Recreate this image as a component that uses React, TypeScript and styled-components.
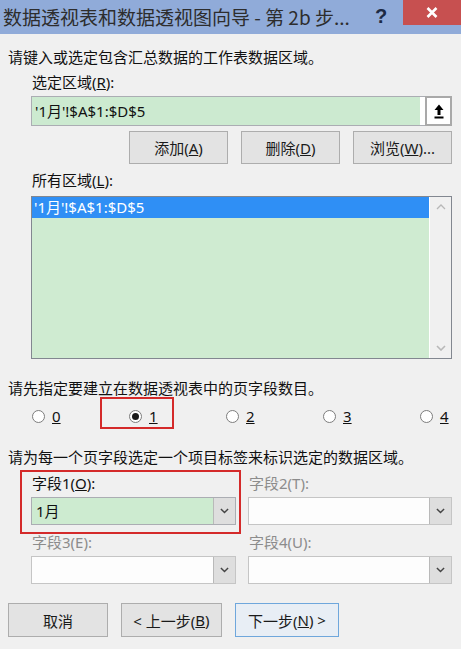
import React from 'react'
import styled, { createGlobalStyle } from 'styled-components'

const GlobalStyle = createGlobalStyle`
  html, body {
    margin: 0;
    padding: 0;
    background: #f0f0f0;
  }
  body {
    font-family: "Noto Sans", "Noto Sans CJK SC", sans-serif;
  }
`

const Window = styled.div`
  width: 461px;
  height: 649px;
  background: #f0f0f0;
  overflow: hidden;
  display: flex;
  flex-direction: column;
  font-size: 15px;
  color: #111;
`

const TitleBar = styled.div`
  height: 34px;
  flex-shrink: 0;
  display: flex;
  align-items: flex-start;
  background: #90abd9;
`

const Title = styled.div`
  flex: 1;
  padding-left: 3px;
  font-family: "Noto Sans CJK SC", sans-serif;
  font-size: 19px;
  line-height: 34px;
  color: #2d2d2d;
  white-space: nowrap;
  overflow: hidden;
`

const HelpButton = styled.div`
  width: 44px;
  height: 34px;
  line-height: 32px;
  text-align: center;
  font-family: "Liberation Sans", sans-serif;
  font-weight: bold;
  font-size: 20px;
  color: #1d2a44;
`

const CloseButton = styled.div`
  width: 58px;
  height: 25px;
  background: #c75050;
  display: flex;
  align-items: center;
  justify-content: center;
`

const Content = styled.div`
  padding: 13px 9px 0 8px;
  display: flex;
  flex-direction: column;
`

const Text = styled.div<{ $indent?: boolean; $gap?: number }>`
  line-height: 20px;
  height: 20px;
  white-space: nowrap;
  margin-top: ${p => p.$gap ?? 0}px;
  padding-left: ${p => (p.$indent ? 24 : 0)}px;
`

const Key = styled.span`
  text-decoration: underline;
`

const RangeInput = styled.div`
  margin: 4px 0 0 23px;
  height: 30px;
  box-sizing: border-box;
  border: 1px solid #abadb3;
  background: #fff;
  display: flex;
`

const RangeText = styled.div`
  flex: 1;
  margin-right: 5px;
  background: #ccead0;
  padding-left: 3px;
  line-height: 28px;
  font-size: 15px;
`

const RefButton = styled.div`
  width: 27px;
  margin: -1px -1px -1px 0;
  box-sizing: border-box;
  border: 2px solid #a9a9a9;
  background: #fff;
  display: flex;
  align-items: center;
  justify-content: center;
`

const ButtonRow = styled.div<{ $align: 'start' | 'end'; $gap: number }>`
  display: flex;
  justify-content: ${p => (p.$align === 'end' ? 'flex-end' : 'flex-start')};
  gap: 13px;
  margin-top: ${p => p.$gap}px;
`

const Button = styled.div<{ $default?: boolean; $width?: number; $height?: number }>`
  width: ${p => p.$width ?? 99}px;
  height: ${p => p.$height ?? 33}px;
  box-sizing: border-box;
  border: 1px solid ${p => (p.$default ? '#6fa7dc' : '#adadad')};
  background: ${p => (p.$default ? '#e8eef5' : '#e3e3e3')};
  display: flex;
  align-items: center;
  justify-content: center;
  font-size: 15px;
  color: #1a1a1a;
`

const ListBox = styled.div`
  margin: 6px 0 0 23px;
  height: 163px;
  box-sizing: border-box;
  border: 1px solid #828790;
  display: flex;
  background: #fff;
`

const ListArea = styled.div`
  flex: 1;
  background: #cfebd1;
  margin-right: 1px;
`

const ListItem = styled.div<{ $selected?: boolean }>`
  height: 21px;
  line-height: 21px;
  padding-left: 2px;
  background: ${p => (p.$selected ? '#2f8ff5' : 'transparent')};
  color: ${p => (p.$selected ? '#fff' : '#111')};
`

const ScrollBar = styled.div`
  width: 21px;
  background: #f0f0f0;
  display: flex;
  flex-direction: column;
  justify-content: space-between;
  align-items: center;
  padding: 7px 0 7px;
`

const RadioRow = styled.div`
  margin-top: 2px;
  height: 32px;
  padding-left: 24px;
  display: grid;
  grid-template-columns: repeat(5, 97px);
  align-items: center;
`

const RadioItem = styled.div<{ $highlight?: boolean }>`
  position: relative;
  display: flex;
  align-items: center;
  gap: 7px;
  height: 32px;

  &::before {
    content: '';
    display: ${p => (p.$highlight ? 'block' : 'none')};
    position: absolute;
    left: -29px;
    top: -3px;
    width: 74px;
    height: 32px;
    box-sizing: border-box;
    border: 2px solid #d42a2a;
  }
`

const RadioCircle = styled.span<{ $checked?: boolean }>`
  width: 13px;
  height: 13px;
  box-sizing: border-box;
  border-radius: 50%;
  border: 1px solid #7d7d7d;
  background: #fff;
  display: flex;
  align-items: center;
  justify-content: center;

  &::after {
    content: '';
    display: ${p => (p.$checked ? 'block' : 'none')};
    width: 7px;
    height: 7px;
    border-radius: 50%;
    background: #1a1a1a;
  }
`

const FieldGrid = styled.div`
  margin: 6px 0 0 23px;
  display: grid;
  grid-template-columns: 205px 204px;
  column-gap: 12px;
  row-gap: 7px;
`

const Field = styled.div<{ $highlight?: boolean }>`
  position: relative;
  display: flex;
  flex-direction: column;

  &::before {
    content: '';
    display: ${p => (p.$highlight ? 'block' : 'none')};
    position: absolute;
    left: -11px;
    right: -5px;
    top: -3px;
    bottom: -9px;
    border: 2px solid #d42a2a;
  }
`

const FieldLabel = styled.div<{ $disabled?: boolean }>`
  line-height: 20px;
  height: 20px;
  padding-left: 1px;
  color: ${p => (p.$disabled ? '#8c8c8c' : '#111')};
`

const Combo = styled.div<{ $disabled?: boolean }>`
  margin-top: 4px;
  height: 28px;
  box-sizing: border-box;
  border: 1px solid ${p => (p.$disabled ? '#c5c5c5' : '#abadb3')};
  background: #fff;
  display: flex;
`

const ComboValue = styled.div<{ $filled?: boolean }>`
  flex: 1;
  background: ${p => (p.$filled ? '#cdebd0' : '#fdfdfd')};
  padding-left: 4px;
  line-height: 26px;
`

const DropButton = styled.div`
  width: 21px;
  background: #dedede;
  border-left: 1px solid #b9b9b9;
  display: flex;
  align-items: center;
  justify-content: center;
`

const Chevron = ({ color, size = 9 }: { color: string; size?: number }) => (
  <svg width={size} height={size * 0.6} viewBox="0 0 10 6">
    <path d="M1 1 L5 5 L9 1" fill="none" stroke={color} strokeWidth="1.6" />
  </svg>
)

const ChevronUp = ({ color }: { color: string }) => (
  <svg width={10} height={6} viewBox="0 0 10 6">
    <path d="M1 5 L5 1 L9 5" fill="none" stroke={color} strokeWidth="1.3" />
  </svg>
)

const fields = [
  { label: '字段1(', key: 'O', filled: true, value: '1月', highlight: true },
  { label: '字段2(T)', disabled: true },
  { label: '字段3(E)', disabled: true },
  { label: '字段4(U)', disabled: true },
]

const App: React.FC = () => {
  return (
    <Window>
      <GlobalStyle />
      <TitleBar>
        <Title>数据透视表和数据透视图向导 - 第 2b 步...</Title>
        <HelpButton>?</HelpButton>
        <CloseButton>
          <svg width="12" height="11" viewBox="0 0 12 11">
            <path d="M1.5 1 L10.5 10 M10.5 1 L1.5 10" stroke="#fff" strokeWidth="2.6" />
          </svg>
        </CloseButton>
      </TitleBar>
      <Content>
        <Text>请键入或选定包含汇总数据的工作表数据区域。</Text>
        <Text $indent $gap={5}>
          选定区域(<Key>R</Key>):
        </Text>
        <RangeInput>
          <RangeText>'1月'!$A$1:$D$5</RangeText>
          <RefButton>
            <svg width="10" height="15" viewBox="0 0 10 15">
              <path d="M5 0.5 L9.5 6 L6.5 6 L6.5 11 L3.5 11 L3.5 6 L0.5 6 Z" fill="#000" />
              <rect x="0.5" y="12.5" width="9" height="2" fill="#000" />
            </svg>
          </RefButton>
        </RangeInput>
        <ButtonRow $align="end" $gap={5}>
          <Button>
            添加(<Key>A</Key>)
          </Button>
          <Button>
            删除(<Key>D</Key>)
          </Button>
          <Button>
            浏览(<Key>W</Key>)...
          </Button>
        </ButtonRow>
        <Text $indent $gap={6}>
          所有区域(<Key>L</Key>):
        </Text>
        <ListBox>
          <ListArea>
            <ListItem $selected>'1月'!$A$1:$D$5</ListItem>
          </ListArea>
          <ScrollBar>
            <ChevronUp color="#b8b8b8" />
            <Chevron color="#b8b8b8" size={10} />
          </ScrollBar>
        </ListBox>
        <Text $gap={19}>请先指定要建立在数据透视表中的页字段数目。</Text>
        <RadioRow>
          {['0', '1', '2', '3', '4'].map(n => (
            <RadioItem key={n} $highlight={n === '1'}>
              <RadioCircle $checked={n === '1'} />
              <Key>{n}</Key>
            </RadioItem>
          ))}
        </RadioRow>
        <Text $gap={15}>请为每一个页字段选定一个项目标签来标识选定的数据区域。</Text>
        <FieldGrid>
          {fields.map(f => (
            <Field key={f.label} $highlight={f.highlight}>
              <FieldLabel $disabled={f.disabled}>
                {f.key ? (
                  <>
                    {f.label}
                    <Key>{f.key}</Key>):
                  </>
                ) : (
                  `${f.label}:`
                )}
              </FieldLabel>
              <Combo $disabled={f.disabled}>
                <ComboValue $filled={f.filled}>{f.value}</ComboValue>
                <DropButton>
                  <Chevron color="#444" />
                </DropButton>
              </Combo>
            </Field>
          ))}
        </FieldGrid>
        <ButtonRow $align="start" $gap={19}>
          <Button $width={100} $height={34}>
            取消
          </Button>
          <Button $width={101} $height={34}>
            &lt; 上一步(<Key>B</Key>)
          </Button>
          <Button $default $width={104} $height={34}>
            下一步(<Key>N</Key>) &gt;
          </Button>
        </ButtonRow>
      </Content>
    </Window>
  )
}

export default App
